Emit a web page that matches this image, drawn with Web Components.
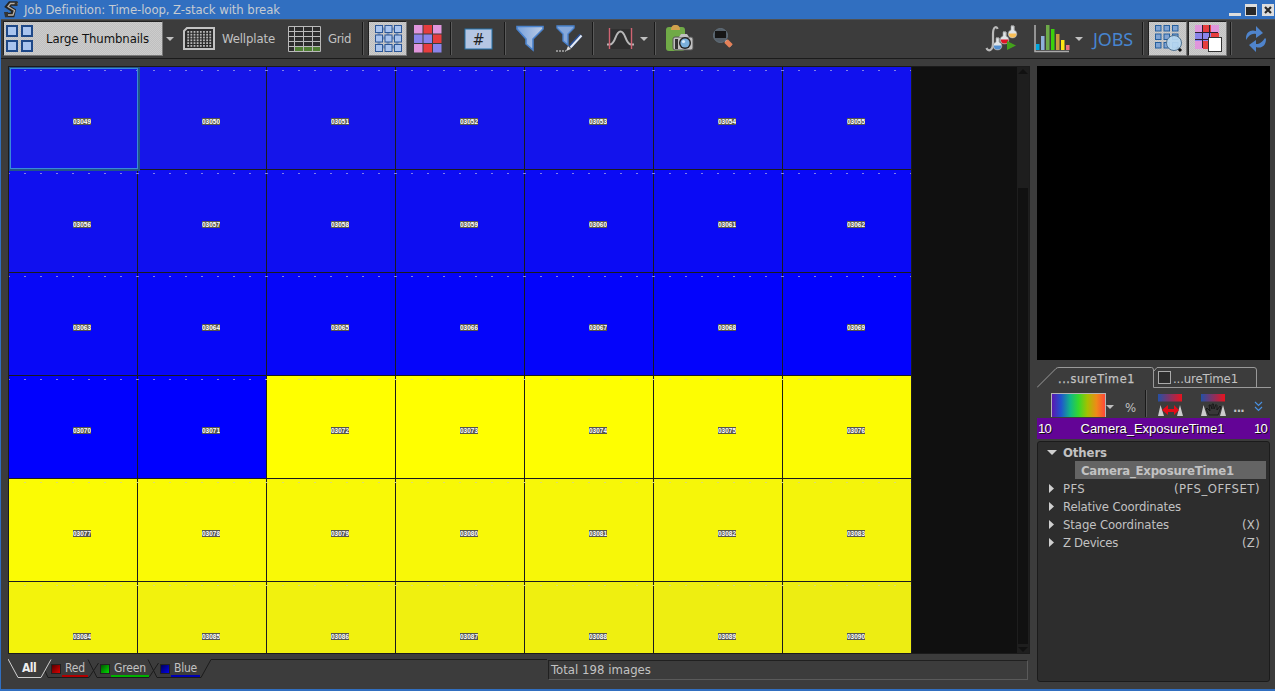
<!DOCTYPE html>
<html lang="en"><head><meta charset="utf-8"><title>Job Definition</title>
<style>
html,body{margin:0;height:100%;overflow:hidden;background:#3c3c3c}
body{font:13px "DejaVu Sans Condensed","DejaVu Sans",sans-serif;color:#c2c2c2}
</style></head><body><job-window></job-window>
<script>
const define=(name,html,ready)=>{
  const t=document.createElement('template');t.innerHTML=html;
  customElements.define(name,class extends HTMLElement{
    constructor(){super();this.attachShadow({mode:'open'}).append(t.content.cloneNode(true));}
    connectedCallback(){if(ready)ready.call(this,this.shadowRoot);}
  });
};
const R=(x,y,w,h,f,s)=>`<rect x="${x}" y="${y}" width="${w}" height="${h}" fill="${f}"${s?` stroke="${s}"`:''}/>`;
const P=(d,f='none',s='none',w=1)=>`<path d="${d}" fill="${f}" stroke="${s}" stroke-width="${w}"/>`;
const grid=(n,step,size,fill,stroke,o=.5)=>{let r='';for(let y=0;y<n;y++)for(let x=0;x<n;x++)r+=R(o+x*step,o+y*step,size,size,typeof fill==='string'?fill:fill[y*n+x],stroke);return r;};
const heat=['#e096dc','#e63d3e','#e096dc','#8a84ea','#8a84ea','#e63d3e','#e096dc','#e63d3e','#8a84ea'];
let dots='';for(let y=0;y<6;y++)for(let x=0;x<8;x++)dots+=R(4.3+x*3.15,4+y*2.8,1.8,1.8,'#b8b8b8');
const flask=(x,y,c)=>`<g transform="translate(${x} ${y})">${P('M3 0h3v4','none','#c8c8c8',1)}${P('M3 0v4C-1 5-1 12 4.500 12S10 5 6 4V0z','#dfe3e6','#999',.6)}${P('M.8 7.500C.8 11 3 11.500 4.500 11.500S8.500 11 8.300 7.500z',c)}</g>`;
const ICONS={
  app:[14,17,P('M13.500 2.500H6L3.500 5.500L9.500 9.500L8.500 14H1','none','#252525',4.500)+P('M14 2.500H6.500L4 5.500L10.500 9.500L9 14H2','none','#b9b0a6',1.300)+P('M0 11h4v5H1zM11 1h3l-1 4h-3z','#333')],
  large:[27,27,[[0,0],[15,0],[0,15],[15,15]].map(a=>`<rect x="${a[0]+1}" y="${a[1]+1}" width="10" height="10" fill="#a9c4ee" stroke="#1e4888" stroke-width="2"/>`).join('')],
  plate:[32,23,P('M4 1H31V22H1V4z','#2c2c2c','#c3c3c3',2)+dots],
  grid:[33,26,R(0,0,33,26,'#2c2c2c')+R(7,20,26,5,'#4e7d32')+P('M.5.5H32.500V25.500H.5zM6.500 0V26M15.500 0V26M24.500 0V26M0 5.500H33M0 10.500H33M0 15.500H33M0 20.500H33','none','#b9b9b9',1)],
  nine:[27,27,P('M4 4V23M13 4V23M22 4V23M4 4H23M4 13H23M4 22H23','none','#8097b7',3)+grid(3,9.500,7,'#a9c4ee','#2c5797')],
  heat:[27,27,grid(3,9.500,8.500,heat,'',0)],
  hash:[29,22,R(1,1,27,20,'#b5c6e3','#2471a8')+'<text x="14.500" y="17" font-size="16" text-anchor="middle" fill="#222">#</text>'],
  funnel:[28,27,P('M1 1.500H27V4L17 14V25L10 19V14L1 4z','url(#fg)','#4a82cc',1.600)],
  fpen:[28,27,P('M1 1H18V3L12 9V20L7 16V9L1 3z','#86a8da','#4a82cc',1.400)+P('M25 10L14 22','none','#2a4e91',4)+P('M25.500 10.500L14.500 22.500','none','#e5ebf5',2)+P('M10 26l2-5 3 3z','#ddd')+P('M0 26H10','none','#aaa',1.500).replace('/>',' stroke-dasharray="2 1"/>')],
  curve:[28,22,R(3,1,22,20,'#303030')+P('M0 16.500H3C9 16 8 3.500 13.500 3.500S18 16 24 16.500H27','none','#b7b7b7',2)+P('M2.500 0V21M24.500 0V21','none','#d06472',1.400)],
  clip:[28,27,'<rect x="0" y="2" width="19" height="24" rx="3" fill="#70aa47"/>'+P('M5 5C5 2 6 0 9.500 0S14 2 14 5z','#d3a14d')+'<rect x="7" y="12" width="20" height="13" rx="2" fill="#c0c0c0" stroke="#555"/>'+P('M13 12l2-3h6l2 3z','#c0c0c0')+R(9,14,3,10,'#333')+'<circle cx="19" cy="18" r="6" fill="#222"/><circle cx="19" cy="18" r="4.600" fill="#7bb0db"/><circle cx="17.500" cy="16.500" r="1.600" fill="#d9ecfa"/>'],
  loupe:[21,21,P('M12 12L18 18','none','#ccc',2)+'<circle cx="7.500" cy="7.500" r="7" fill="#555f69" stroke="#62707b"/>'+R(2,3,11,7,'#161616')+P('M13 13L18 18','none','#e58058',5)],
  flasks:[33,26,P('M12.500 3C12 0 8 0 8 8V17C8 25 3 26 1.500 22','none','#b9b9b9',2.200)+flask(15,6,'#df1524')+flask(23,0,'#f7bd55')+flask(8,12,'#528fd0')+P('M22 15l9 4.500-9 4.500z','#43a21b')],
  chart:[35,28,P('M1 0V26.500H35','none','#aaa',1.600)+[[2,19,'#00a7df'],[7,11,'#8fb0da'],[12,0,'#6daa48'],[17,4,'#3cd10b'],[22,9,'#c99a3d'],[27,15,'#ffe713'],[32,20,'#ee7180']].map(b=>R(b[0],b[1],3.500,25-b[1],b[2])).join('')],
  nineloupe:[27,28,grid(3,8.500,5.500,'#7fa3d3','#255f9d')+P('M22 22L26 26','none','#111',3)+'<circle cx="19" cy="18" r="7.500" fill="#b7d8f1" fill-opacity=".92" stroke="#4f718f"/>'],
  heatsel:[27,28,grid(3,8,8,heat,'',0)+P('M7.500 0V23M14.500 0V23M0 7.500H23M0 14.500H23','none','#2c2030',1)+R(13.500,12.500,13,14,'#fff','#333')],
  refresh:[22,26,P('M1 12C1 6 6 3 11 5V0L18 7 11 12V8C7 7 4 9 1 14z','#4f84cc')+P('M21 13C21 20 16 23 11 21V26L4 19 11 14V18C15 18 17 16 20 12z','#4f84cc')],
  down:[8,4,P('M0 0H8L4 4z','#c0c0c0')],right:[5,9,P('M0 0L5 4.500 0 9z','#cfcfcf')],
  open:[10,5,P('M0 0H10L5 5z','#cfcfcf')],
  auto:[25,22,R(0,0,24,7.500,'url(#br)')+P('M0 22L2.500 11 6 22M19 22L22 11 25 22','#ccc')+P('M4 16L10 11V15H16V11L21 16 16 21V18H10V21z','#e30b17')],
  hand:[25,22,R(0,0,24,7.500,'url(#br)')+P('M0 22L2.500 11 6 22M19 22L22 11 25 22','#ccc')+P('M8 21L5 15 6 14 9 17 8 11 9.500 11 11 15V10h1.500L13 15 15 10.500l1 1L16 16l3-4 1 1-3 8z','#383838','#111',.8)],
  more:[7,10,P('M0 0L3.500 3.500 7 0M0 5L3.500 8.500 7 5','none','#4990e0',1.200)]
};
define('ui-icon','<style>:host{display:block;flex:none}svg{display:block;overflow:visible;font-family:"DejaVu Sans Condensed",sans-serif}</style><div></div>',function(r){
  const i=ICONS[this.getAttribute('name')];
  r.querySelector('div').innerHTML=`<svg width="${i[0]}" height="${i[1]}"><defs><linearGradient id="fg"><stop stop-color="#79a2dc"/><stop offset="1" stop-color="#bdcce4"/></linearGradient><linearGradient id="br"><stop stop-color="#2450a6"/><stop offset="1" stop-color="#e8131e"/></linearGradient></defs>${i[2]}</svg>`;
});
/* Text tracked to a given advance width. */
define('fit-text','<style>:host{display:block;flex:none;white-space:pre}span{display:inline-block}</style><span><slot></slot></span>',function(r){
  const s=r.querySelector('span'),w=+this.getAttribute('w');this.style.width=w+'px';
  s.style.letterSpacing=(w-s.getBoundingClientRect().width)/this.textContent.length+'px';
});
define('tool-sep','<style>:host{display:block;flex:none;width:1px;height:33px;background:#191919;border-right:1px solid #5a5a5a}</style>');
define('tool-button',`<style>:host{display:flex;flex:none;align-items:center;justify-content:center;box-sizing:border-box;height:35px;padding-left:2px;color:#111;border:1px solid #222;border-right-color:#777;border-bottom-color:#777;background:repeating-conic-gradient(#c0c0c0 0 25%,#cccccc 0 50%) 0 0/2px 2px}</style><slot></slot>`);
define('title-bar',`<style>:host{display:flex;height:19px;background:#316fc0;align-items:center;color:#c5cbd2}
.b{box-sizing:border-box}.min{width:12px;height:3px;background:#ddd;margin:9px 4px 0 auto}.max{width:12px;height:12px;border:1px solid #ddd;border-top-width:3px;background:#292929;margin-right:5px}.x{width:12px;height:12px;background:#ddd;margin-right:1px}svg{display:block}</style>
<ui-icon name="app" style="margin-left:3px"></ui-icon><fit-text w="256" style="margin-left:6px">Job Definition: Time-loop, Z-stack with break</fit-text>
<div class="b min"></div><div class="b max"></div><div class="b x"><svg width="12" height="12"><path d="M3 3L9 9M9 3L3 9" stroke="#292929" stroke-width="2.200"/></svg></div>`);
define('tool-bar',`<style>:host{display:flex;box-sizing:border-box;height:40px;align-items:center;padding:1px 8px 2px 0;background:#3c3c3c;border-top:1px solid #515151;border-bottom:1px solid #1b1b1b}</style>
<tool-button style="width:160px;margin-left:2px;justify-content:flex-start"><ui-icon name="large"></ui-icon><fit-text w="103" style="margin-left:13px">Large Thumbnails</fit-text></tool-button>
<ui-icon name="down" style="margin-left:3px"></ui-icon>
<ui-icon name="plate" style="margin-left:9px"></ui-icon><fit-text w="53" style="margin-left:7px">Wellplate</fit-text>
<ui-icon name="grid" style="margin-left:13px"></ui-icon><fit-text w="23" style="margin-left:7px">Grid</fit-text>
<tool-sep style="margin-left:11px"></tool-sep><tool-button style="width:39px;margin-left:4px"><ui-icon name="nine"></ui-icon></tool-button>
<ui-icon name="heat" style="margin-left:7px"></ui-icon><tool-sep style="margin-left:9px"></tool-sep>
<ui-icon name="hash" style="margin-left:12px"></ui-icon><tool-sep style="margin-left:11px"></tool-sep>
<ui-icon name="funnel" style="margin-left:10px"></ui-icon><ui-icon name="fpen" style="margin-left:12px"></ui-icon><tool-sep style="margin-left:8px"></tool-sep>
<ui-icon name="curve" style="margin-left:13px"></ui-icon><ui-icon name="down" style="margin-left:5px"></ui-icon><tool-sep style="margin-left:6px"></tool-sep>
<ui-icon name="clip" style="margin-left:10px"></ui-icon><ui-icon name="loupe" style="margin-left:19px"></ui-icon>
<ui-icon name="flasks" style="margin-left:auto"></ui-icon><ui-icon name="chart" style="margin-left:16px"></ui-icon><ui-icon name="down" style="margin-left:6px"></ui-icon>
<fit-text w="40" style="margin-left:10px;font:18px 'Noto Sans',sans-serif;color:#4785d0">JOBS</fit-text><tool-sep style="margin-left:9px"></tool-sep>
<tool-button style="width:39px;margin-left:4px"><ui-icon name="nineloupe"></ui-icon></tool-button><tool-button style="width:39px;margin-left:1px"><ui-icon name="heatsel"></ui-icon></tool-button>
<tool-sep style="margin-left:3px"></tool-sep><ui-icon name="refresh" style="margin-left:13px"></ui-icon>`);
define('thumb-cell',`<style>:host{display:block;position:relative;box-sizing:border-box;border-right:1px solid #1b1b1e;border-bottom:1px solid #1b1b1e;background:var(--c);padding:51px 0 0 64px}
:host::before{content:"";position:absolute;left:-1px;right:0;top:3px;height:1px;background:repeating-linear-gradient(90deg,var(--dash) 0 2px,transparent 2px 16px)}
:host([selected])::after{content:"";position:absolute;left:0;top:0;width:131px;height:104px;border:solid #22558a;border-width:1px 2px 2px 1px;box-shadow:inset 0 0 0 1px #3a8ad8;z-index:2;box-sizing:border-box}
b{display:block;width:18px;height:7px;background:#55554c;overflow:hidden;color:#fff}
span{display:block;width:max-content;transform-origin:0 0;transform:scaleX(.81);font:bold 8px/7px "Liberation Sans",sans-serif}</style><b><span></span></b>`,function(r){r.querySelector('span').textContent=this.getAttribute('label');});
define('thumb-gallery',`<style>:host{display:grid;grid-template-columns:1fr 12px;box-sizing:border-box;height:588px;border:1px solid #1b1b1b;background:#101010;overflow:hidden}
.g{display:grid;grid-template-columns:repeat(7,129px);grid-auto-rows:103px;align-content:start;height:586px;overflow:hidden}
.s{background:#1e1e1e;display:flex;flex-direction:column;align-items:center;border-left:0}.t{width:10px;flex:1;background:#111;margin-top:113px}svg{display:block;flex:none}</style><div class="g"></div>
<div class="s"><svg width="10" height="8"><path d="M0 7L5 2 10 7z" fill="#111"/></svg><div class="t"></div><svg width="10" height="9"><path d="M0 3H10L5 8z" fill="#111"/></svg></div>`,function(r){
  let h='';for(let i=0;i<42;i++){const y=i>22,v=Math.round(Math.max(0,y?(i-24)*1.05:23-i*1.05));
  h+=`<thumb-cell label="0${3049+i}" ${i?'':'selected'} style="--c:${y?`rgb(${255-v},${255-v},${v})`:`rgb(${v},${v},${255-v})`};--dash:${y?'#dcdc70':'#8080e8'}"></thumb-cell>`;}
  r.querySelector('.g').innerHTML=h;
});
define('channel-bar',`<style>:host{display:flex;height:35px}.tabs{position:relative;width:540px;height:35px;flex:none}svg.l{position:absolute;inset:0}
.r{display:flex;position:relative;padding-top:5px;font-size:12px;line-height:18px}.all{margin-left:14px;color:#eee;font-weight:bold}
i{margin:5px 1px 0 0;border:1px solid #222;flex:none;box-sizing:border-box;width:10px;height:10px}.u{border-bottom:2px solid var(--u);height:16px;line-height:18px;padding:0 3px}
.st{margin-top:6px;width:480px;height:20px;box-sizing:border-box;border:1px solid #202020;border-right-color:#5a5a5a;border-bottom-color:#5a5a5a;padding-left:2px;line-height:17px}</style>
<div class="tabs"><svg class="l" width="539" height="35" fill="none" stroke="#1b1b1b"><path d="M37 17l3 6.500H81L90.500 9M80 5.500L89 23.500H141L150.500 9M140 5.500L149 23.500H193L203 5.500H539"/><path d="M0 5l10 18.500H33L43 5.500" stroke="#d0d0d0"/></svg>
<div class="r"><fit-text class="all" w="14">All</fit-text><i style="margin-left:15px;background:linear-gradient(135deg,#500,#d00)"></i><div class="u" style="--u:#b00000"><fit-text w="20">Red</fit-text></div>
<i style="margin-left:12px;background:linear-gradient(135deg,#050,#0d0)"></i><div class="u" style="--u:#00b000"><fit-text w="32">Green</fit-text></div>
<i style="margin-left:11px;background:linear-gradient(135deg,#005,#00e)"></i><div class="u" style="--u:#0000b4"><fit-text w="23">Blue</fit-text></div></div></div>
<div class="st"><fit-text w="100">Total 198 images</fit-text></div>`);
define('tree-row',`<style>:host{display:flex;height:18px;align-items:center;padding:0 9px 0 11px;box-sizing:border-box}.a{width:14px;flex:none}::slotted(.v){margin-left:auto}:host([open]) .a{margin-left:-2px;width:16px}</style><div class="a"></div><slot></slot>`,function(r){
  r.querySelector('.a').innerHTML=`<ui-icon name="${this.hasAttribute('open')?'open':'right'}"></ui-icon>`;
});
define('side-panel',`<style>:host{display:block;width:234px}.black{height:294px;width:233px;background:#000}
.tabs{height:29px;position:relative}.tabs svg{position:absolute;left:0;top:0}.names{display:flex;position:relative;padding:10px 0 0 21px;height:18px;line-height:17px}.names i{box-sizing:border-box;width:13px;height:13px;border:1px solid #aaa;background:#2d2d2d;margin:1px 3px 0 23px}
.tools{display:flex;align-items:flex-start;height:29px}.rain{box-sizing:border-box;width:55px;height:24px;margin:4px 0 0 14px;border:1px solid #b5b5b5;border-bottom:0;background:linear-gradient(90deg,#5c18b0,#2053cf 17%,#10b984 35%,#35d82c 50%,#a5c000 67%,#ef8a18 84%,#ff4838)}
.bar{display:flex;height:21px;line-height:21px;width:233px;background:#630496;color:#fff;box-sizing:border-box;padding:0 3px 0 1px;justify-content:space-between;font-family:"Liberation Sans",sans-serif;text-shadow:1px 1px #111}
.tree{margin-top:2px;width:233px;height:241px;box-sizing:border-box;background:#2d2d2d;border:1px solid #1b1b1b;border-radius:3px;padding-top:1px}.sel{margin:0 3px 0 37px;height:18px;display:flex;align-items:center;padding-left:6px;background:#646464}.bd{font-weight:bold}</style>
<div class="black"></div>
<div class="tabs"><svg width="234" height="29" fill="none" stroke="#999"><path d="M0 27.500L19 8.500Q20 7.500 22 7.500H114.500Q116.500 7.500 116.500 10V27.500H234M117 11L120 7.500H217Q219.500 7.500 219.500 10V27"/></svg>
<div class="names"><fit-text w="77" style="font-size:12.500px;-webkit-text-stroke:.25px">...sureTime1</fit-text><i></i><fit-text w="65" style="margin-left:-1px">...ureTime1</fit-text></div></div>
<div class="tools"><div class="rain"></div><ui-icon name="down" style="margin:16px 0 0 0"></ui-icon><fit-text w="12" style="margin:11px 0 0 11px">%</fit-text><tool-sep style="height:27px;margin:1px 0 0 8px"></tool-sep>
<ui-icon name="auto" style="margin:5px 0 0 11px"></ui-icon><ui-icon name="hand" style="margin:5px 0 0 18px"></ui-icon><fit-text w="11" style="margin:11px 0 0 7px;font-weight:bold">...</fit-text><ui-icon name="more" style="margin:13px 0 0 11px"></ui-icon></div>
<div class="bar"><fit-text w="13">10</fit-text><fit-text w="144">Camera_ExposureTime1</fit-text><fit-text w="13">10</fit-text></div>
<div class="tree"><tree-row open><fit-text class="bd" w="44">Others</fit-text></tree-row><div class="sel"><fit-text class="bd" w="153">Camera_ExposureTime1</fit-text></div>
<tree-row><fit-text w="22">PFS</fit-text><fit-text class="v" w="86">(PFS_OFFSET)</fit-text></tree-row><tree-row><fit-text w="118">Relative Coordinates</fit-text></tree-row>
<tree-row><fit-text w="106">Stage Coordinates</fit-text><fit-text class="v" w="18">(X)</fit-text></tree-row><tree-row><fit-text w="55">Z Devices</fit-text><fit-text class="v" w="18">(Z)</fit-text></tree-row></div>`);
define('job-window',`<style>:host{display:block;box-sizing:border-box;width:1275px;height:691px;border-left:1px solid #316fc0;border-bottom:2px solid #316fc0;background:#3c3c3c;overflow:hidden}
main{display:grid;grid-template-columns:1022px 234px;column-gap:7px;padding:7px 0 0 7px}</style>
<title-bar></title-bar><tool-bar></tool-bar><main><div><thumb-gallery></thumb-gallery><channel-bar></channel-bar></div><side-panel></side-panel></main>`);
</script></body></html>
